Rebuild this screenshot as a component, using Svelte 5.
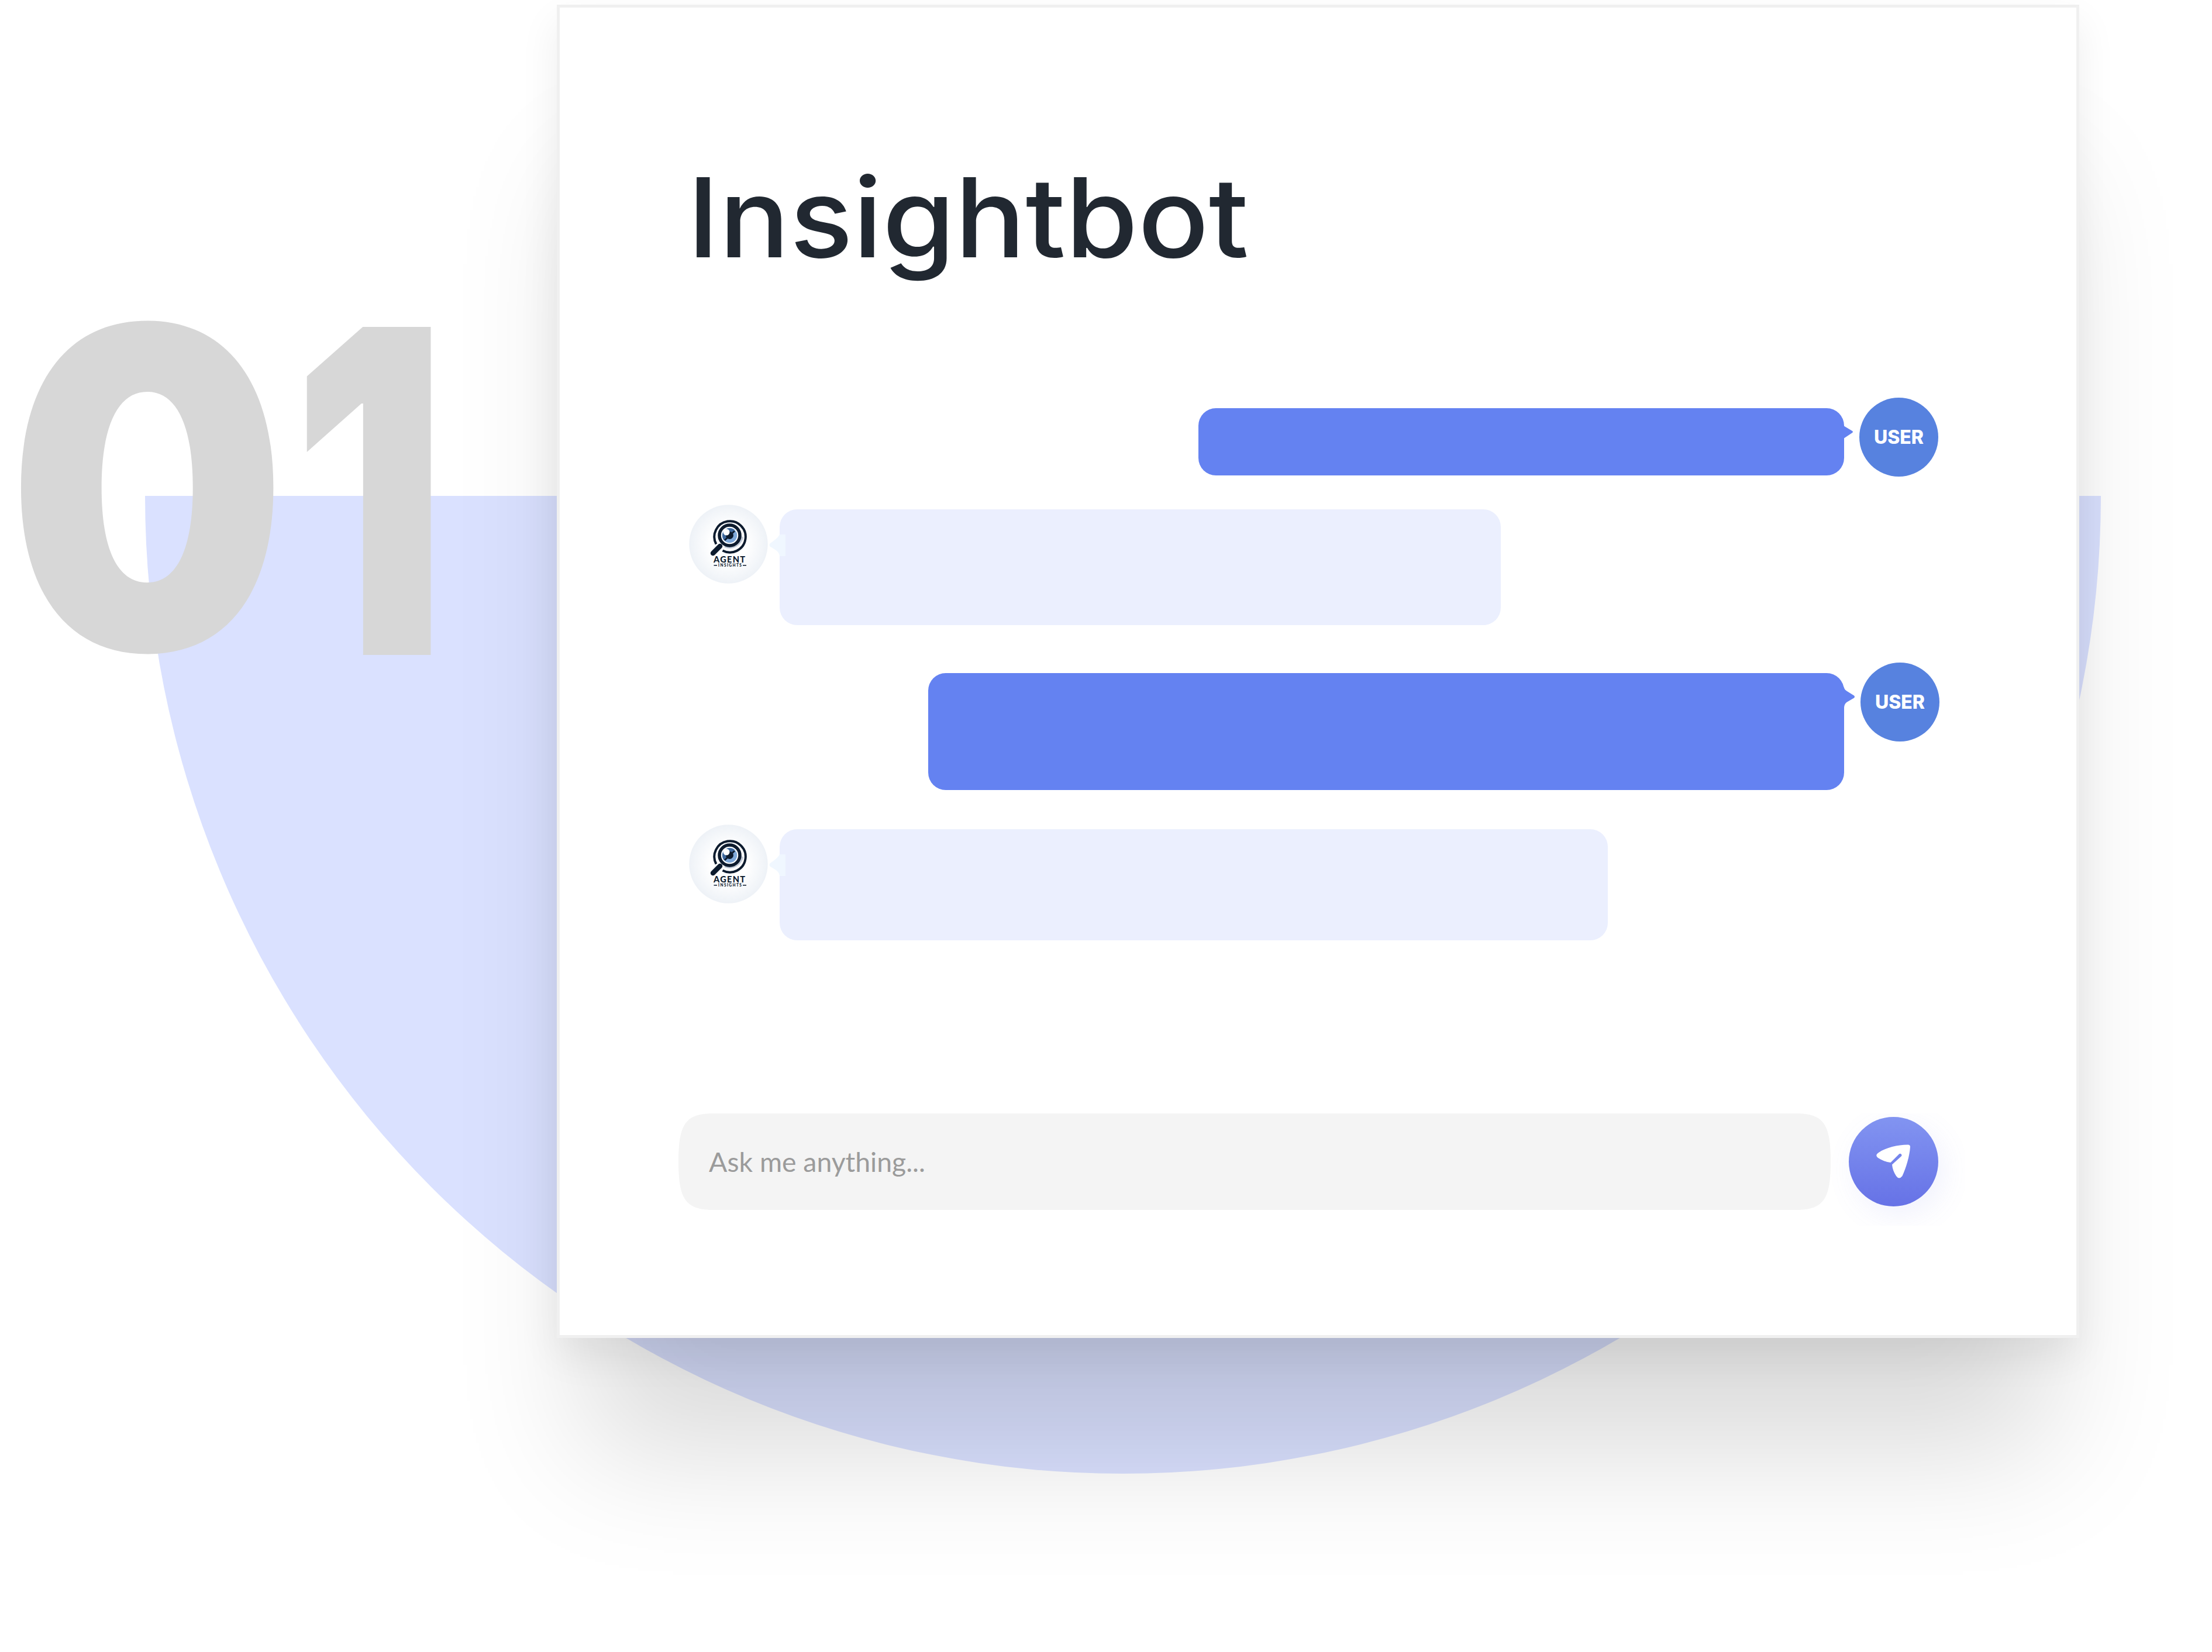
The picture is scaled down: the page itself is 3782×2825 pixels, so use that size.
<script>
  const rows = [
    { who: 'user', cls: 'r1' },
    { who: 'bot', cls: 'r2' },
    { who: 'user', cls: 'r3' },
    { who: 'bot', cls: 'r4' }
  ];
</script>

<main>
  <div class="semi"></div>
  <svg class="num" viewBox="0 0 900 1300">
    <text transform="translate(13 1111) scale(.88 1)" font-size="763">0</text>
    <text transform="translate(499 1120) scale(.76 1)" font-size="771">1</text>
  </svg>

  <section class="card">
    <h1><svg width="1000" height="260"><text x="35" y="180" textLength="960" lengthAdjust="spacingAndGlyphs">Insightbot</text></svg></h1>
    <div class="chat">
      {#each rows as r}
        <div class="row {r.who} {r.cls}">
          {#if r.who === 'bot'}
            <svg class="avatar" viewBox="0 0 135 135">
              <defs>
                <radialGradient id="g{r.cls}"><stop offset=".45" stop-color="#fff" /><stop offset="1" stop-color="#eef2f7" /></radialGradient>
              </defs>
              <circle cx="67.500" cy="67.500" r="67.200" fill="url(#g{r.cls})" />
              <path d="M60 73A24 24 0 0 0 93 56L88 52A22 22 0 0 1 62 71Z" fill="#c3cbd8" />
              <path d="M46.500 67.500A26.700 26.700 0 1 1 57.500 78.500" fill="none" stroke="#0d1b2e" stroke-width="4" />
              <circle cx="69.500" cy="52.500" r="17.500" fill="#fff" stroke="#0d1b2e" stroke-width="5.500" />
              <circle cx="69.500" cy="52.500" r="12.800" fill="#7fa9da" />
              <path d="M60 61A12.800 12.800 0 0 1 78 43L73 48Z" fill="#3d679b" />
              <path d="M61 61L78 45" stroke="#0d1b2e" stroke-width="3" />
              <circle cx="69.500" cy="52.500" r="6.500" fill="#0d1b2e" />
              <circle cx="64" cy="47" r="5.500" fill="#fff" />
              <path d="M41 83L53 71" stroke="#0d1b2e" stroke-width="8.500" stroke-linecap="round" />
              <text x="42" y="98.500" font-size="14.600" font-weight="900" textLength="54" lengthAdjust="spacing">AGENT</text>
              <text x="50" y="106.300" font-size="6.600" font-weight="900" textLength="40">INSIGHTS</text>
              <path d="M42.500 103.700H48M92 103.700H98" stroke="#0d1b2e" stroke-width="1.500" />
            </svg>
            <div class="bubble">
              <svg class="tail" viewBox="0 0 28 37"><path d="M28 0H18C16 4 12 8 2 15Q-1 18 2 21C12 27 17 29 18 37H28Z" fill="#f0f7ff" /></svg>
            </div>
          {:else}
            <div class="bubble">
              {#if r.cls === 'r1'}
                <svg class="tail" viewBox="0 0 17 22"><path d="M0 0L15 9Q17 10.500 15 12L0 22Z" fill="#6482f1" /></svg>
              {:else}
                <svg class="tail flare" viewBox="0 0 20 36"><path d="M0 0C2 5 3 6 6 8L18 15.500Q20 17.500 18 19.500L6 26.500C3 28.500 1.500 31 1 36H0Z" fill="#6482f1" /></svg>
              {/if}
            </div>
            <div class="badge">USER</div>
          {/if}
        </div>
      {/each}
    </div>
    <div class="ask">
      <div class="input">
        <svg class="fill" viewBox="0 0 1970 165"><path d="M60 0H1910C1958 0 1970 18 1970 82.500S1958 165 1910 165H60C12 165 0 147 0 82.500S12 0 60 0Z" fill="#f4f4f4" /></svg>
        <svg class="hint" width="400" height="80"><text x="0" y="57" textLength="370" lengthAdjust="spacingAndGlyphs">Ask me anything...</text></svg>
      </div>
      <div class="halo">
        <div class="send">
          <svg viewBox="0 0 58 58"><path d="M4 14C17 5 36 1 54 .5Q58 .5 58 4C57 20 51 40 44.500 54Q39 61 34 54C30 48 27.500 41 27 34.500L42.500 20.500A2.400 2.400 0 0 0 39 16.500L24.500 31C17 30 9 27 3 23Q-3 18.500 4 14Z" fill="#fff" /></svg>
        </div>
      </div>
    </div>
  </section>
</main>

<style>
  :global(body) { background: #fff; overflow: hidden; }
  main { position: relative; width: 3782px; height: 2825px; overflow: hidden; background: #fff; font-family: Inter, sans-serif; box-sizing: border-box; padding: 8px 0 0 952px; }
  .semi { position: absolute; left: 248px; top: 848px; width: 3344px; height: 1672px; border-radius: 0 0 1672px 1672px; background: #dae1ff; }
  .num { position: absolute; left: 0; top: 0; width: 900px; height: 1300px; font-weight: 900; fill: #d7d7d7; overflow: visible; }
  .card { position: relative; width: 2603px; height: 2280px; box-sizing: border-box; border: 5px solid #f0f0f0; background: #fff; box-shadow: 0 245px 210px -52px rgba(0,0,0,.145), 0 30px 64px rgba(0,0,0,.07); display: flex; flex-direction: column; }
  h1 { margin: 247px 0 0 183px; height: 260px; font-size: 188px; font-weight: 500; }
  h1 svg { display: block; fill: #212831; overflow: visible; }
  .chat { display: flex; flex-direction: column; margin: 160px 0 0 221px; height: 1224px; width: 2138px; }
  .row { display: flex; align-items: flex-start; }
  .user { justify-content: flex-end; }
  .bubble { position: relative; border-radius: 30px; }
  .user .bubble { background: #6482f1; margin-top: 18px; }
  .bot .bubble { background: #ebeffe; margin: 8px 0 0 20px; }
  .r1 { height: 183px; padding-right: 2px; }
  .r1 .bubble { width: 1104px; height: 115px; margin-right: 26px; }
  .r2 { height: 270px; }
  .r2 .bubble { width: 1233px; height: 198px; }
  .r3 { height: 277px; }
  .r3 .bubble { width: 1566px; height: 200px; margin-right: 28px; }
  .r4 .bubble { width: 1416px; height: 190px; }
  .avatar { width: 135px; height: 135px; font-family: Lato, sans-serif; fill: #0d1b2e; flex: none; }
  .badge { width: 135px; height: 135px; border-radius: 50%; background: #5782df; color: #fff; font: 800 32px/136px Inter, sans-serif; text-align: center; }
  .tail { position: absolute; }
  .user .tail { left: 100%; top: 30px; width: 17px; height: 22px; margin-left: -1px; }
  .user .flare { top: 23px; width: 20px; height: 36px; }
  .bot .tail { left: -18px; top: 43px; width: 28px; height: 37px; }
  .ask { display: flex; margin-left: 203px; height: 165px; }
  .input { position: relative; width: 1970px; height: 165px; display: flex; align-items: center; }
  .fill { position: absolute; inset: 0; width: 1970px; height: 165px; }
  .hint { position: relative; margin-left: 52px; font: 400 46px Lato, sans-serif; fill: #9b9b9b; }
  .halo { padding: 6px 45px 33px 31px; height: 153px; overflow: hidden; }
  .send { width: 153px; height: 153px; border-radius: 50%; background: linear-gradient(#8294f1, #6672e6); box-shadow: 10px 15px 50px rgba(110,120,235,.1); display: flex; }
  .send svg { width: 58px; height: 58px; margin: 47px 0 0 47px; }
</style>
